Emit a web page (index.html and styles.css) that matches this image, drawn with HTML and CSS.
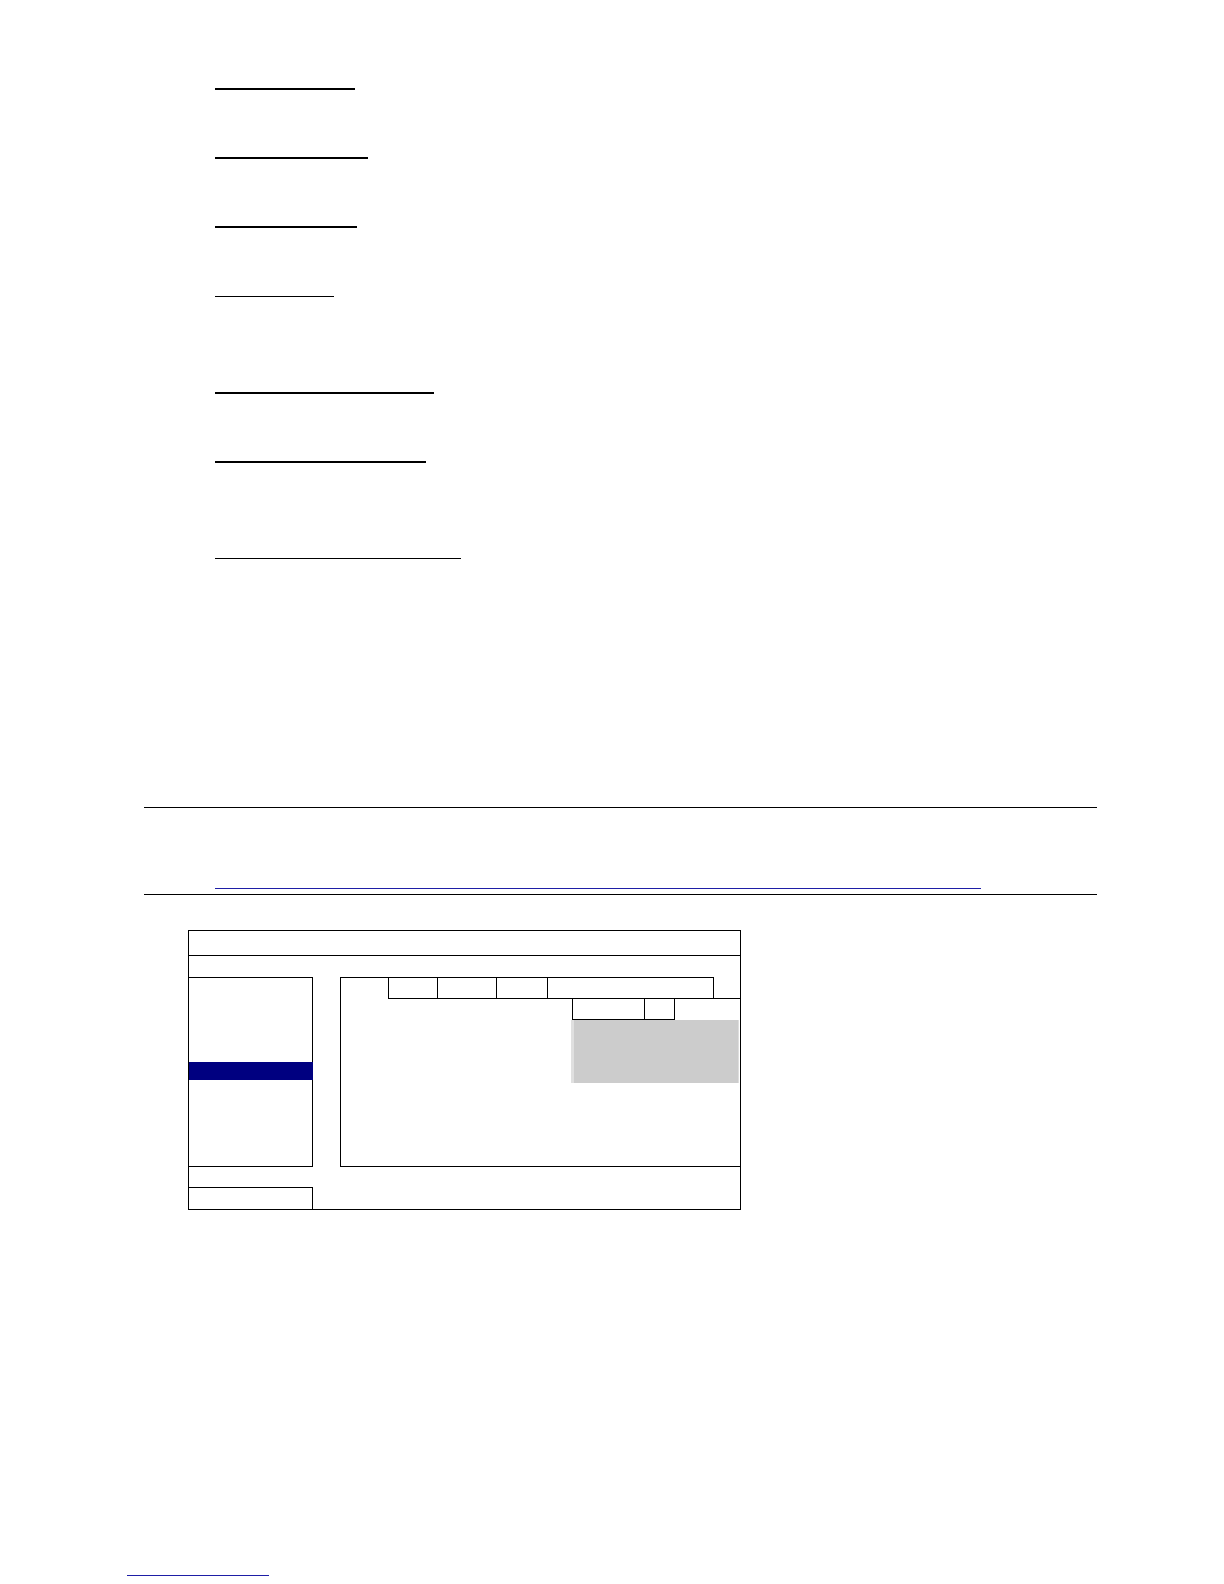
FILE: index.html
```html
<!DOCTYPE html>
<html lang="en">
<head>
<meta charset="utf-8">
<title>Manual page</title>
<link rel="stylesheet" href="styles.css">
</head>
<body>
<main class="page">
  <section class="headings">
    <div class="uline u1"></div>
    <div class="uline u2"></div>
    <div class="uline u3"></div>
    <div class="uline u4"></div>
    <div class="uline u5"></div>
    <div class="uline u6"></div>
    <div class="uline u7"></div>
  </section>

  <div class="rule rule-top"></div>
  <div class="link-line"></div>
  <div class="rule rule-bottom"></div>

  <section class="osd">
    <div class="osd-title"></div>
    <div class="osd-body">
      <div class="osd-row">
        <nav class="sidebar">
          <div class="sel"></div>
        </nav>
        <div class="panel">
          <div class="tabrow">
            <div class="tab-spacer"></div>
            <div class="tab t1"></div>
            <div class="tab t2"></div>
            <div class="tab t3"></div>
            <div class="tab t4"></div>
            <div class="tab-tail"></div>
          </div>
          <div class="subrow">
            <div class="subtab s1"></div>
            <div class="subtab s2"></div>
          </div>
          <div class="dropdown"></div>
        </div>
      </div>
      <div class="small-box"></div>
    </div>
  </section>

  <div class="foot-link"></div>
</main>
</body>
</html>
```

FILE: styles.css
```css
html, body {
  margin: 0;
  padding: 0;
  background: #ffffff;
  font-family: "Liberation Sans", Arial, sans-serif;
}

.page {
  display: flex;
  flex-direction: column;
  align-items: flex-start;
}

.headings {
  display: flex;
  flex-direction: column;
  align-items: flex-start;
}

.uline {
  margin-left: 215px;
  height: 0;
  border-top: 2px solid #000;
}
.u1 { margin-top: 88px; width: 140px; }
.u2 { margin-top: 67px; width: 153px; }
.u3 { margin-top: 67px; width: 142px; }
.u4 { margin-top: 68px; width: 119px; border-top-width: 1px; }
.u5 { margin-top: 95px; width: 219px; }
.u6 { margin-top: 67px; width: 211px; }
.u7 { margin-top: 95px; width: 246px; border-top-width: 1px; }

.rule {
  margin-left: 144px;
  width: 953px;
  height: 0;
  border-top: 1px solid #000;
}
.rule-top { margin-top: 248px; }
.rule-bottom { margin-top: 5px; }

.link-line {
  margin-top: 80px;
  margin-left: 215px;
  width: 766px;
  height: 0;
  border-top: 1px solid #1e1ea6;
}

.osd {
  margin-top: 35px;
  margin-left: 188px;
  width: 553px;
  height: 280px;
  box-sizing: border-box;
  border: 1px solid #000;
  display: flex;
  flex-direction: column;
}

.osd-title {
  height: 25px;
  box-sizing: border-box;
  border-bottom: 1px solid #000;
}

.osd-body {
  padding-top: 21px;
  display: flex;
  flex-direction: column;
  gap: 20px;
}

.osd-row {
  display: flex;
  height: 190px;
}

.sidebar {
  width: 124px;
  height: 190px;
  box-sizing: border-box;
  border-top: 1px solid #000;
  border-right: 1px solid #000;
  border-bottom: 1px solid #000;
}

.sel {
  margin-top: 84px;
  height: 18px;
  margin-right: -1px;
  background: #000080;
}

.panel {
  margin-left: 27px;
  flex: 1;
  height: 190px;
  box-sizing: border-box;
  border-left: 1px solid #000;
  border-bottom: 1px solid #000;
  display: flex;
  flex-direction: column;
}

.tabrow {
  display: flex;
  height: 22px;
}

.tab-spacer {
  width: 47px;
  box-sizing: border-box;
  border-top: 1px solid #000;
}

.tab {
  box-sizing: border-box;
  border-left: 1px solid #000;
  border-top: 1px solid #000;
  border-bottom: 1px solid #000;
}
.t1 { width: 49px; }
.t2 { width: 59px; }
.t3 { width: 51px; }
.t4 { width: 167px; border-right: 1px solid #000; }

.tab-tail {
  flex: 1;
  box-sizing: border-box;
  border-bottom: 1px solid #000;
}

.subrow {
  display: flex;
  height: 21px;
  margin-left: 231px;
}

.subtab {
  box-sizing: border-box;
  border-left: 1px solid #000;
  border-bottom: 1px solid #000;
}
.s1 { width: 72px; }
.s2 { width: 31px; border-right: 1px solid #000; }

.dropdown {
  margin-left: 230px;
  width: 168px;
  height: 63px;
  box-sizing: border-box;
  background: #cccccc;
  border-left: 3px solid #e0e0e0;
  border-right: 1px solid #dedede;
}

.small-box {
  width: 124px;
  height: 22px;
  box-sizing: border-box;
  border-top: 1px solid #000;
  border-right: 1px solid #000;
}

.foot-link {
  margin-top: 365px;
  margin-left: 127px;
  width: 142px;
  height: 0;
  border-top: 1px solid #1e1ea6;
}
```
